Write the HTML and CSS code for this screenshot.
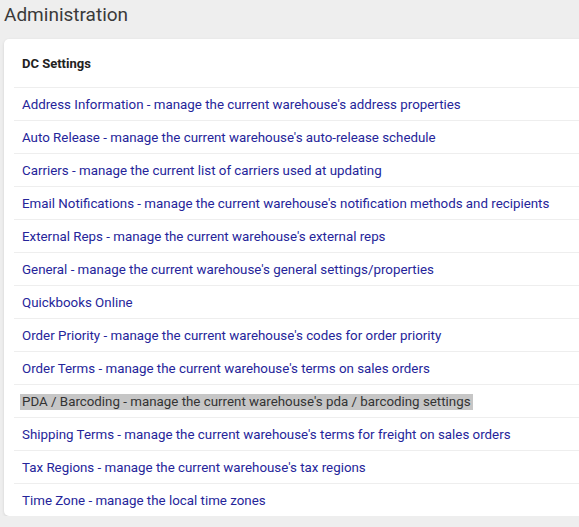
FILE: index.html
```html
<!DOCTYPE html>
<html>
<head>
<meta charset="utf-8">
<link rel="stylesheet" href="styles.css">
</head>
<body>
<h1 class="page-title">Administration</h1>
<div class="card">
  <div class="card-header">DC Settings</div>
  <ul class="settings-list">
    <li class="row"><a class="link" href="#">Address Information - manage the current warehouse's address properties</a></li>
    <li class="row"><a class="link" href="#">Auto Release - manage the current warehouse's auto-release schedule</a></li>
    <li class="row"><a class="link" href="#">Carriers - manage the current list of carriers used at updating</a></li>
    <li class="row"><a class="link" href="#">Email Notifications - manage the current warehouse's notification methods and recipients</a></li>
    <li class="row"><a class="link" href="#">External Reps - manage the current warehouse's external reps</a></li>
    <li class="row"><a class="link" href="#">General - manage the current warehouse's general settings/properties</a></li>
    <li class="row"><a class="link" href="#">Quickbooks Online</a></li>
    <li class="row"><a class="link" href="#">Order Priority - manage the current warehouse's codes for order priority</a></li>
    <li class="row"><a class="link" href="#">Order Terms - manage the current warehouse's terms on sales orders</a></li>
    <li class="row"><a class="link link-active" href="#">PDA / Barcoding - manage the current warehouse's pda / barcoding settings</a></li>
    <li class="row"><a class="link" href="#">Shipping Terms - manage the current warehouse's terms for freight on sales orders</a></li>
    <li class="row"><a class="link" href="#">Tax Regions - manage the current warehouse's tax regions</a></li>
    <li class="row"><a class="link" href="#">Time Zone - manage the local time zones</a></li>
  </ul>
</div>
</body>
</html>
```
FILE: styles.css
```css
html, body {
  margin: 0;
  padding: 0;
  background: #eeeeee;
  font-family: Roboto, "Liberation Sans", Arial, sans-serif;
  overflow: hidden;
}
body {
  padding: 0 0 0 4px;
}
.page-title {
  margin: 0;
  padding-top: 3px;
  height: 36px;
  font-size: 19px;
  font-weight: 400;
  line-height: 24px;
  color: #3a3a3a;
}
.card {
  background: #fff;
  border-radius: 5px 0 0 5px;
  box-shadow: 0 1px 3px rgba(0,0,0,0.12);
  width: 600px;
}
.card-header {
  height: 48px;
  display: flex;
  align-items: center;
  padding-left: 18px;
  font-size: 13px;
  font-weight: 700;
  color: #222;
}
.settings-list {
  list-style: none;
  margin: 0 0 0 10px;
  padding: 0;
}
.row {
  height: 32px;
  box-sizing: border-box;
  height: 33px;
  padding-top: 1px;
  border-top: 1px solid #eeeeee;
  display: flex;
  align-items: center;
  padding-left: 8px;
  font-size: 13.33px;
}
.link {
  color: #25259a;
  text-decoration: none;
  line-height: 16px;
}
.link-active {
  background: #c6c6c6;
  color: #333;
  padding: 0 2px;
  margin-left: -2px;
}
```
